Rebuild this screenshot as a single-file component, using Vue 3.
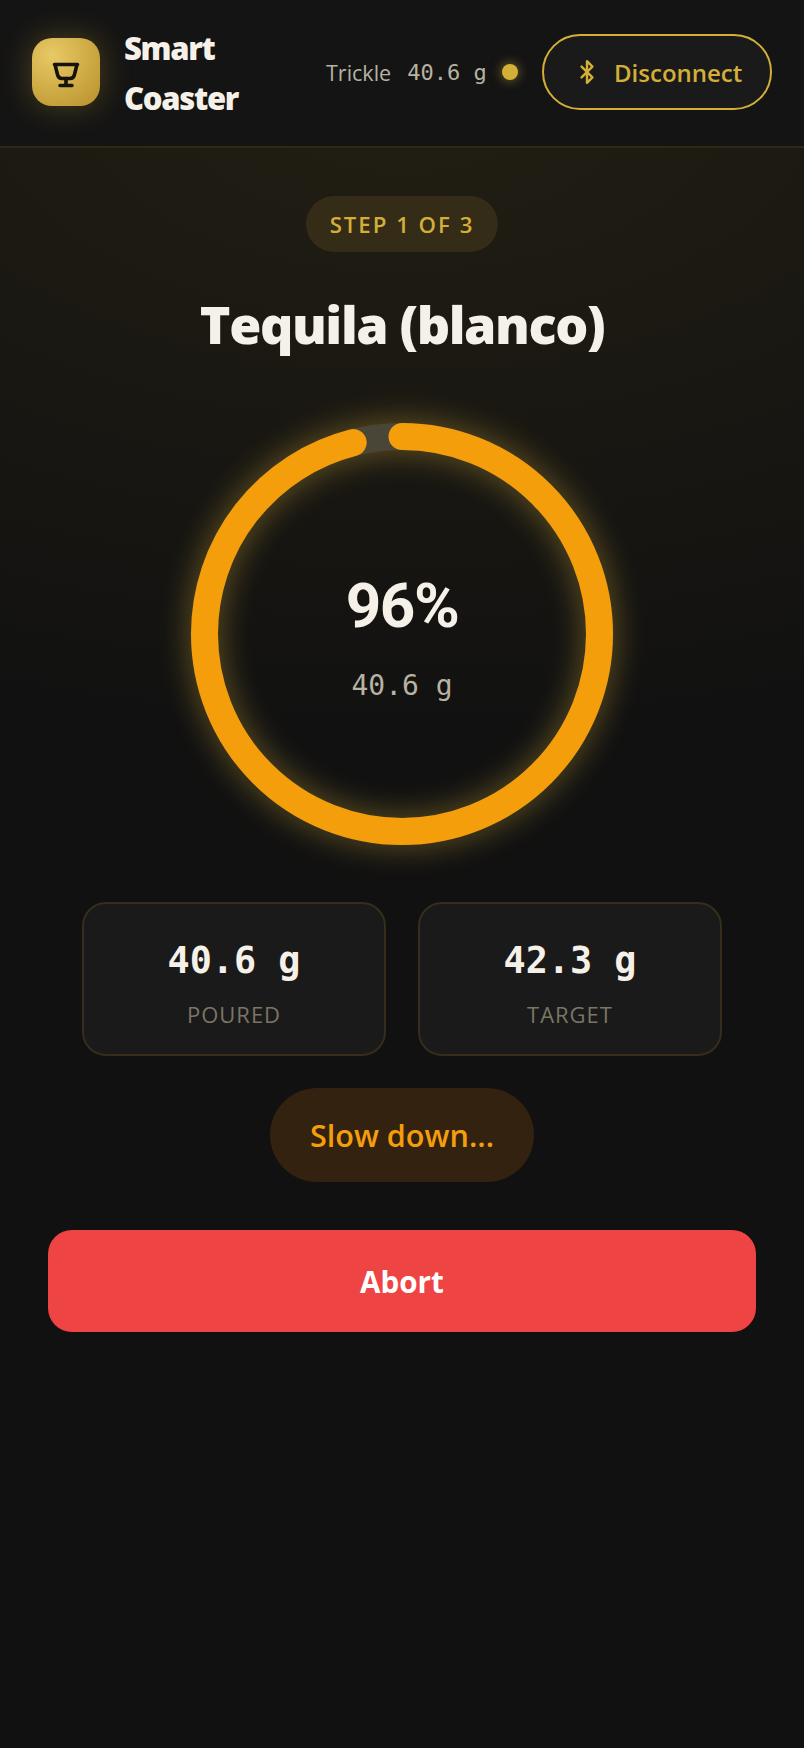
<script setup>
import { ref, computed } from 'vue';

const poured = ref(40.6);
const target = ref(42.3);
const radius = 197.5;
const circumference = 2 * Math.PI * radius;
const pct = computed(() => Math.round((poured.value / target.value) * 100));
const dash = computed(() => circumference * (1 - poured.value / target.value));
</script>

<template>
  <div class="page">
    <header class="topbar">
      <div class="brand">
        <div class="logo">
          <svg class="logo-icon" width="32" height="32" viewBox="0 0 32 32" fill="none" stroke="#151208" stroke-width="3.6" stroke-linecap="round" stroke-linejoin="round">
            <path d="M4.5 8.5h23M5 8.5l2.6 10.4a4.5 4.5 0 0 0 4.4 3.6h8a4.5 4.5 0 0 0 4.4-3.6L27 8.5" />
            <path d="M16 22.5v7M10 29.5h12" />
          </svg>
        </div>
        <div class="brand-name">Smart Coaster</div>
      </div>
      <div class="status">
        <span class="status-label">Trickle</span>
        <span class="status-value">40.6 g</span>
        <span class="dot"></span>
      </div>
      <button class="disconnect">
        <svg class="bt-icon" width="26" height="26" viewBox="0 0 24 24" fill="none" stroke="#d4af37" stroke-width="2.2" stroke-linecap="round" stroke-linejoin="round">
          <path d="m7 7 10 10-5 5V2l5 5L7 17" />
        </svg>
        <span>Disconnect</span>
      </button>
    </header>

    <main class="main">
      <div class="step">STEP 1 OF 3</div>
      <h1 class="title">Tequila (blanco)</h1>

      <div class="ring">
        <svg width="422" height="422" viewBox="0 0 422 422">
          <circle class="track" cx="211" cy="211" :r="radius" />
          <circle class="progress" cx="211" cy="211" :r="radius" :stroke-dasharray="circumference" :stroke-dashoffset="dash" transform="rotate(-90 211 211)" />
        </svg>
        <div class="ring-text">
          <div class="pct">{{ pct }}%</div>
          <div class="grams">{{ poured }} g</div>
        </div>
      </div>

      <div class="cards">
        <div class="card">
          <div class="card-value">{{ poured }} g</div>
          <div class="card-label">POURED</div>
        </div>
        <div class="card">
          <div class="card-value">{{ target }} g</div>
          <div class="card-label">TARGET</div>
        </div>
      </div>

      <div class="hint">Slow down...</div>
      <button class="abort">Abort</button>
    </main>
  </div>
</template>

<style>
body {
  background: #111111;
}
</style>

<style scoped>
* {
  box-sizing: border-box;
}

.page {
  width: 804px;
  height: 1748px;
  background: radial-gradient(ellipse 1200px 640px at 50% 100px, #221e13 0%, #111111 100%);
  font-family: "Open Sans", "Noto Sans", sans-serif;
  color: #f5f1e8;
}

.topbar {
  display: flex;
  align-items: center;
  height: 148px;
  padding: 0 32px 2px;
  background: #141414;
  border-bottom: 2px solid #2e2815;
}

.brand {
  display: flex;
  align-items: center;
  gap: 24px;
  width: 294px;
}

.logo {
  width: 68px;
  height: 68px;
  flex: none;
  display: flex;
  align-items: center;
  justify-content: center;
  border-radius: 20px;
  background: radial-gradient(circle at 30% 25%, #e8c964, #bd9630 90%);
  box-shadow: 0 0 32px rgba(212, 175, 55, 0.3);
}

.logo-icon {
  display: block;
}

.brand-name {
  width: 130px;
  margin-top: 2px;
  font-size: 31px;
  font-weight: 800;
  line-height: 50px;
  letter-spacing: -1.3px;
}

.status {
  display: flex;
  align-items: center;
  width: 216px;
  font-size: 21.5px;
  color: #b8b2a3;
}

.status-value {
  margin-left: 16px;
  font-family: "DejaVu Sans Mono", monospace;
  font-size: 22px;
}

.dot {
  width: 16px;
  height: 16px;
  margin-left: 15px;
  border-radius: 50%;
  background: #d4af37;
  box-shadow: 0 0 12px rgba(212, 175, 55, 0.6);
}

.disconnect {
  display: flex;
  align-items: center;
  gap: 14px;
  width: 230px;
  height: 76px;
  padding: 0 0 0 30px;
  border: 2px solid #d4af37;
  border-radius: 38px;
  background: #1a1a1a;
  color: #d4af37;
  font-family: inherit;
  font-size: 24px;
  font-weight: 600;
}

.bt-icon {
  flex: none;
}

.main {
  display: flex;
  flex-direction: column;
  align-items: center;
  padding: 48px 48px 0;
}

.step {
  display: flex;
  align-items: center;
  height: 56px;
  padding: 0 24px;
  border-radius: 28px;
  background: #352c17;
  color: #d4af37;
  font-size: 22.2px;
  font-weight: 600;
  letter-spacing: 2px;
}

.title {
  margin: 38px 0 0;
  font-size: 52px;
  font-weight: 800;
  line-height: 68px;
  letter-spacing: -1.4px;
}

.ring {
  position: relative;
  width: 422px;
  height: 422px;
  margin-top: 65px;
}

.ring svg {
  display: block;
  filter: drop-shadow(0 0 16px rgba(212, 175, 55, 0.45));
}

.track,
.progress {
  fill: none;
  stroke-width: 27;
}

.track {
  stroke: #4a4637;
}

.progress {
  stroke: #f59e0b;
  stroke-linecap: round;
}

.ring-text {
  position: absolute;
  inset: 0;
  display: flex;
  flex-direction: column;
  align-items: center;
  justify-content: center;
}

.pct {
  font-family: Roboto, sans-serif;
  font-size: 62px;
  font-weight: 700;
  line-height: 80px;
  letter-spacing: -1.5px;
}

.grams {
  margin-top: 23px;
  font-family: "DejaVu Sans Mono", monospace;
  font-size: 28px;
  color: #b8b2a3;
}

.cards {
  display: flex;
  gap: 32px;
  margin-top: 57px;
}

.card {
  width: 304px;
  height: 154px;
  padding-top: 32px;
  border: 2px solid #352e1b;
  border-radius: 24px;
  background: #1a1a1a;
  text-align: center;
}

.card-value {
  font-family: "DejaVu Sans Mono", monospace;
  font-size: 36.8px;
  font-weight: 700;
  line-height: 50px;
}

.card-label {
  margin-top: 13px;
  font-size: 22px;
  color: #7a7565;
  letter-spacing: 1px;
}

.hint {
  display: flex;
  align-items: center;
  height: 94px;
  margin-top: 32px;
  padding: 0 40px;
  border-radius: 47px;
  background: #32220f;
  color: #f59e0b;
  font-size: 30.6px;
  font-weight: 600;
}

.abort {
  width: 708px;
  height: 102px;
  margin-top: 48px;
  border: none;
  border-radius: 24px;
  background: #ef4444;
  color: #fff;
  font-family: inherit;
  font-size: 29.6px;
  font-weight: 700;
}
</style>
